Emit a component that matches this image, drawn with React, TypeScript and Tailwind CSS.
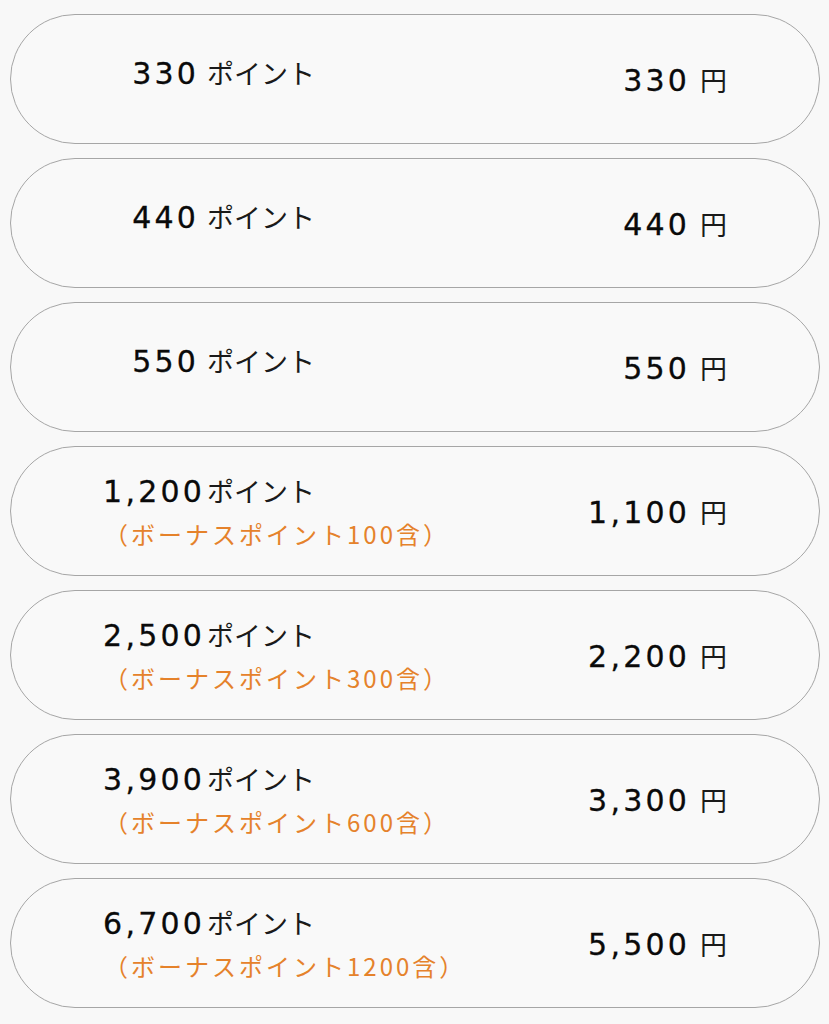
import React from "react";

type Row = { pts: string; bonus?: string; price: string };

const rows: Row[] = [
  { pts: "330", price: "330" },
  { pts: "440", price: "440" },
  { pts: "550", price: "550" },
  { pts: "1,200", bonus: "100", price: "1,100" },
  { pts: "2,500", bonus: "300", price: "2,200" },
  { pts: "3,900", bonus: "600", price: "3,300" },
  { pts: "6,700", bonus: "1200", price: "5,500" },
];

const NUM = { fontFamily: '"DejaVu Sans", "Noto Sans CJK JP", sans-serif' };
const JP = { fontFamily: '"Noto Sans CJK JP", "Noto Sans", sans-serif' };

export default function App() {
  return (
    <div className="min-h-[1024px] w-full bg-[#f8f8f8] pl-[10px] pr-[9px] pt-[14px]">
      <div className="flex flex-col gap-[14px]">
        {rows.map((r, i) => (
          <div
            key={i}
            className="flex h-[130px] items-center justify-between rounded-full border-[1.5px] border-[#a6a6a6] bg-[#f9f9f9] pl-[86px] pr-[92px]"
          >
            <div className={`flex w-[218px] flex-col ${r.bonus ? "" : "mb-[12px]"}`}>
              <div className="flex items-baseline justify-end whitespace-nowrap leading-[34px]">
                <span
                  style={NUM}
                  className="text-[30px] tracking-[3.2px] text-[#0a0a0a] [-webkit-text-stroke:0.3px_#0a0a0a]"
                >
                  {r.pts}
                </span>
                <span style={JP} className={`text-[27px] text-[#1a1a1a] ${r.bonus ? "ml-[2px]" : "ml-[8px]"}`}>
                  ポイント
                </span>
              </div>
              {r.bonus && (
                <div
                  style={JP}
                  className="ml-[7px] mt-[10px] whitespace-nowrap text-[24px] leading-[30px] tracking-[3px] text-[#e5822b]"
                >
                  （ボーナスポイント{r.bonus}含）
                </div>
              )}
            </div>
            <div className="mt-[3px] flex items-baseline whitespace-nowrap leading-[34px]">
              <span
                style={NUM}
                className="text-[30px] tracking-[3.2px] text-[#0a0a0a] [-webkit-text-stroke:0.3px_#0a0a0a]"
              >
                {r.price}
              </span>
              <span style={JP} className="ml-[10px] text-[27px] text-[#1a1a1a]">
                円
              </span>
            </div>
          </div>
        ))}
      </div>
    </div>
  );
}
